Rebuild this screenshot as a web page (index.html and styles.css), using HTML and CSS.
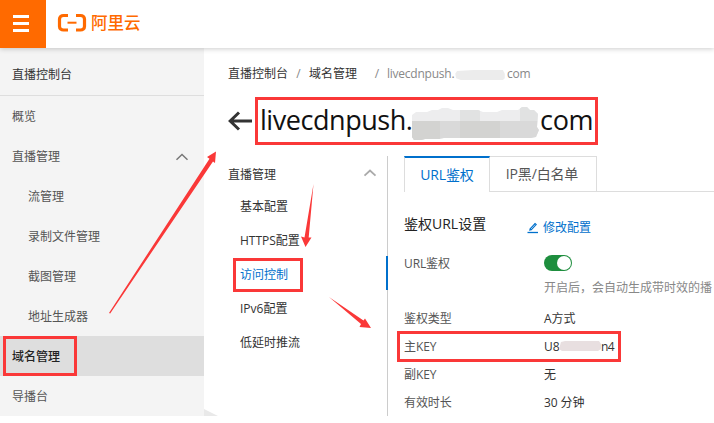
FILE: index.html
```html
<!DOCTYPE html>
<html lang="zh-CN">
<head>
<meta charset="utf-8">
<title>直播控制台</title>
<link rel="stylesheet" href="styles.css">
</head>
<body>
<div class="app">
  <header class="topbar">
    <button class="menu" aria-label="菜单"><span></span><span></span><span></span></button>
    <div class="brand">
      <svg width="30" height="20" viewBox="0 0 30 20" fill="none" stroke="#ff6a00">
        <path d="M11 2.500H6.500C4.200 2.500 2.500 4 2.500 6V13.500C2.500 15.500 4.200 17 6.500 17H11M19 2.500H23.500C25.800 2.500 27.500 4 27.500 6V13.500C27.500 15.500 25.800 17 23.500 17H19" stroke-width="3.200"/>
        <path d="M10.500 9.700H19.500" stroke-width="2"/>
      </svg>
      <span>阿里云</span>
    </div>
  </header>
  <div class="body">
    <nav class="side">
      <div class="side-title">直播控制台</div>
      <a class="item">概览</a>
      <a class="item group">直播管理<svg class="chev" width="14" height="8" viewBox="0 0 14 8"><path d="M1.500 6.700L7 1.500L12.500 6.700"/></svg></a>
      <a class="item sub">流管理</a>
      <a class="item sub">录制文件管理</a>
      <a class="item sub">截图管理</a>
      <a class="item sub">地址生成器</a>
      <a class="item active">域名管理</a>
      <a class="item">导播台</a>
    </nav>
    <main class="main">
      <div class="crumbs"><span>直播控制台</span><i>/</i><span>域名管理</span><i class="wide">/</i><span class="here host">livecdnpush.</span><svg class="smudge-s" width="54" height="11" viewBox="0 0 54 12"><path d="M2 1L20 0H52L54 4V9L52 11H6L1 9L0 4Z" fill="#ececec"/></svg><span class="here">com</span></div>
      <div class="title">
        <svg class="back" width="24" height="20" viewBox="0 0 24 20"><path d="M2 10H24M11 1.500L2.200 10L11 18.500"/></svg>
        <h1 class="name">livecdnpush.</h1>
        <svg class="smudge-l" width="127" height="34" viewBox="0 0 127 34">
          <defs><clipPath id="blot"><path d="M0 8L4 5H15L20 3H26L30 1H36L41 3H66L71 5H85L90 3H106L110 0H115L118 3H122L126 7L125 20L127 23L124 30L119 31H32L27 32H13L9 33H2L0 30Z"/></clipPath></defs>
          <g clip-path="url(#blot)">
            <path fill="#ededee" d="M0 0H127V34H0Z"/>
            <path fill="#e1e2e2" d="M48 0H68V14H48ZM108 0H127V14H108Z"/>
            <path fill="#d9d9d9" d="M0 14H127V34H0Z"/>
            <path fill="#d3d3d1" d="M0 14H28V34H0ZM48 14H88V34H48Z"/>
          </g>
        </svg>
        <h1 class="tld">com</h1>
      </div>
      <div class="columns">
        <nav class="subnav">
          <div class="sub-title">直播管理<svg class="chev light" width="14" height="8" viewBox="0 0 14 8"><path d="M1.500 6.700L7 1.500L12.500 6.700"/></svg></div>
          <a>基本配置</a>
          <a>HTTPS配置</a>
          <a class="on">访问控制</a>
          <a>IPv6配置</a>
          <a>低延时推流</a>
        </nav>
        <section class="panel">
          <div class="tabs"><a class="tab current">URL鉴权</a><a class="tab">IP黑/白名单</a></div>
          <div class="section-head">
            <h2>鉴权URL设置</h2>
            <a class="edit"><svg width="12" height="12" viewBox="0 0 12 12"><path d="M2 8.800L2.700 6.500L8 0.800L10 2.600L4.600 8.300Z" fill="#0070cc"/><path d="M4 7L8.200 2.600" stroke="#fff" stroke-width=".6"/><path d="M0.500 10.500H11" stroke="#0070cc" stroke-width="1.300"/></svg>修改配置</a>
          </div>
          <dl class="rows">
            <dt class="auth">URL鉴权</dt>
            <dd class="auth"><span class="switch"><b></b></span><p>开启后，会自动生成带时效的播</p></dd>
            <dt>鉴权类型</dt><dd>A方式</dd>
            <dt>主KEY</dt><dd><span class="key">U8</span><svg class="smudge-k" width="42" height="11" viewBox="0 0 42 11"><path d="M2 1L6 0H40L42 3V8L39 10H3L0 8Z" fill="#e8dfe0"/></svg><span class="key-end">n4</span></dd>
            <dt>副KEY</dt><dd>无</dd>
            <dt>有效时长</dt><dd>30 分钟</dd>
          </dl>
        </section>
      </div>
    </main>
  </div>
  <svg class="notes" width="714" height="423" viewBox="0 0 714 423">
    <path d="M204 409L218 416H204Z" fill="#e9e9e9"/>
    <g fill="none" stroke="#fa3838" stroke-width="3">
      <rect x="256.500" y="98.500" width="340" height="45"/>
      <rect x="4.500" y="337.500" width="71" height="37"/>
      <rect x="234.500" y="259.500" width="67" height="31"/>
      <rect x="398.500" y="332.500" width="221" height="28"/>
    </g>
    <g fill="#fa3838">
      <path d="M109 313L209.500 158.800L207 157L216 151.500L215 163L213 161.500L110.200 313.500Z"/>
      <path d="M313.500 184L304.500 237.500L301 236.500L305.500 247L311.500 237.500L308.700 237.500Z"/>
      <path d="M329 297L361 324L359.500 327L371 328L365 318.500L363.500 320.500Z"/>
    </g>
  </svg>
</div>
</body>
</html>
```
FILE: styles.css
```css
* { box-sizing: border-box; }
body {
  margin: 0;
  background: #fff;
  color: #333;
  font: 12px/16px "Open Sans", "Noto Sans CJK SC", sans-serif;
  overflow: hidden;
}
h1, h2, p, dl, dd { margin: 0; font-weight: 400; }
svg { flex: none; }
.app { position: relative; width: 714px; height: 416px; }

.topbar {
  position: relative;
  z-index: 1;
  display: flex;
  height: 48px;
  background: #fff;
  box-shadow: 0 1px 5px rgba(0, 0, 0, .2);
}
.menu {
  display: flex;
  flex-direction: column;
  align-items: center;
  justify-content: center;
  gap: 4px;
  width: 46px;
  padding: 0 4px 2px 0;
  border: 0;
  background: #ff6a00;
}
.menu span { width: 16px; height: 3px; background: #fff; }
.brand {
  display: flex;
  align-items: center;
  gap: 4px;
  padding: 0 0 2px 11px;
  color: #ff6a00;
  font-size: 16.500px;
  font-weight: 500;
}

.body { display: flex; height: 368px; }
.side { width: 204px; background: #f4f4f4; }
.side-title {
  height: 48px;
  padding: 19px 12px 0;
  border-bottom: 1px solid #dedede;
}
.item {
  display: flex;
  align-items: center;
  height: 40px;
  padding: 2px 15px 0 12px;
  color: #555;
}
.group { justify-content: space-between; }
.sub { padding-left: 28px; }
.active { background: #dedede; color: #222; font-weight: 500; }
.chev path { fill: none; stroke: #777; stroke-width: 1.500; }
.chev.light path { stroke: #aaa; stroke-width: 1.800; }

.main { flex: 1; min-width: 0; overflow: hidden; padding-left: 24px; }
.crumbs { display: flex; align-items: center; height: 50px; padding-top: 1px; white-space: nowrap; }
.crumbs i { width: 21px; color: #888; font-style: normal; text-align: center; }
.crumbs .wide { width: 30px; padding-left: 10px; }
.crumbs .here { color: #888; letter-spacing: -.3px; }
.crumbs .host { width: 66px; letter-spacing: -.24px; }
.smudge-s { margin-top: 3px; }
.title { display: flex; align-items: center; height: 46px; color: #111; }
.title h1 { font-size: 27px; line-height: 40px; padding-bottom: 2px; }
.title .name { width: 151px; margin-left: 8px; letter-spacing: -.45px; }
.title .tld { letter-spacing: -.3px; }
.back path { fill: none; stroke: #333; stroke-width: 3; }
.smudge-l { margin: 6px 1px 0 1px; }

.columns { display: flex; height: 260px; margin-top: 12px; }
.subnav { width: 160px; border-right: 1px solid #ccc; }
.sub-title {
  display: flex;
  justify-content: space-between;
  height: 32px;
  padding: 11px 10px 0 0;
}
.sub-title .chev { margin-top: 2px; }
.subnav a { display: block; height: 34px; padding: 11px 0 0 12px; }
.subnav .on { margin-right: -1px; border-right: 2px solid #0070cc; color: #0070cc; }

.panel { flex: 1; min-width: 0; padding-left: 16px; }
.tabs { display: flex; height: 36px; border-bottom: 1px solid #ddd; font-size: 14px; letter-spacing: -.15px; }
.tab {
  display: flex;
  align-items: center;
  justify-content: center;
  width: 107px;
  padding-right: 2px;
  border: 1px solid #ddd;
  border-width: 1px 1px 0 0;
  color: #555;
}
.tab.current {
  width: 86px;
  height: 36px;
  padding: 0 0 1px;
  border-width: 2px 1px 0;
  border-top-color: #0070cc;
  background: #fff;
  color: #0070cc;
}
.section-head { display: flex; align-items: center; height: 64px; }
.section-head h2 { width: 123px; color: #222; font-size: 14px; }
.edit { display: flex; align-items: center; gap: 4px; padding-top: 7px; color: #0070cc; }
.rows { display: grid; grid-template-columns: 140px 1fr; grid-template-rows: 48px; grid-auto-rows: 28px; white-space: nowrap; }
.rows dt { color: #555; padding-top: 7px; letter-spacing: -.1px; }
.rows dd { display: flex; white-space: pre; padding-top: 7px; letter-spacing: -.1px; }
.rows .auth { display: block; padding-top: 0; }
.rows p { margin-top: 9px; color: #888; letter-spacing: 0; }
.switch {
  display: flex;
  justify-content: flex-end;
  width: 28px;
  height: 16px;
  margin-top: -1px;
  padding: 1px;
  border-radius: 8px;
  background: #1e8e3e;
}
.switch b { width: 14px; height: 14px; border-radius: 50%; background: #fff; }
.key { width: 15px; }
.smudge-k { margin: 2px 0 0; }
.key-end { letter-spacing: -.5px; }

.notes { position: absolute; z-index: 2; top: 0; left: 0; pointer-events: none; }
```
